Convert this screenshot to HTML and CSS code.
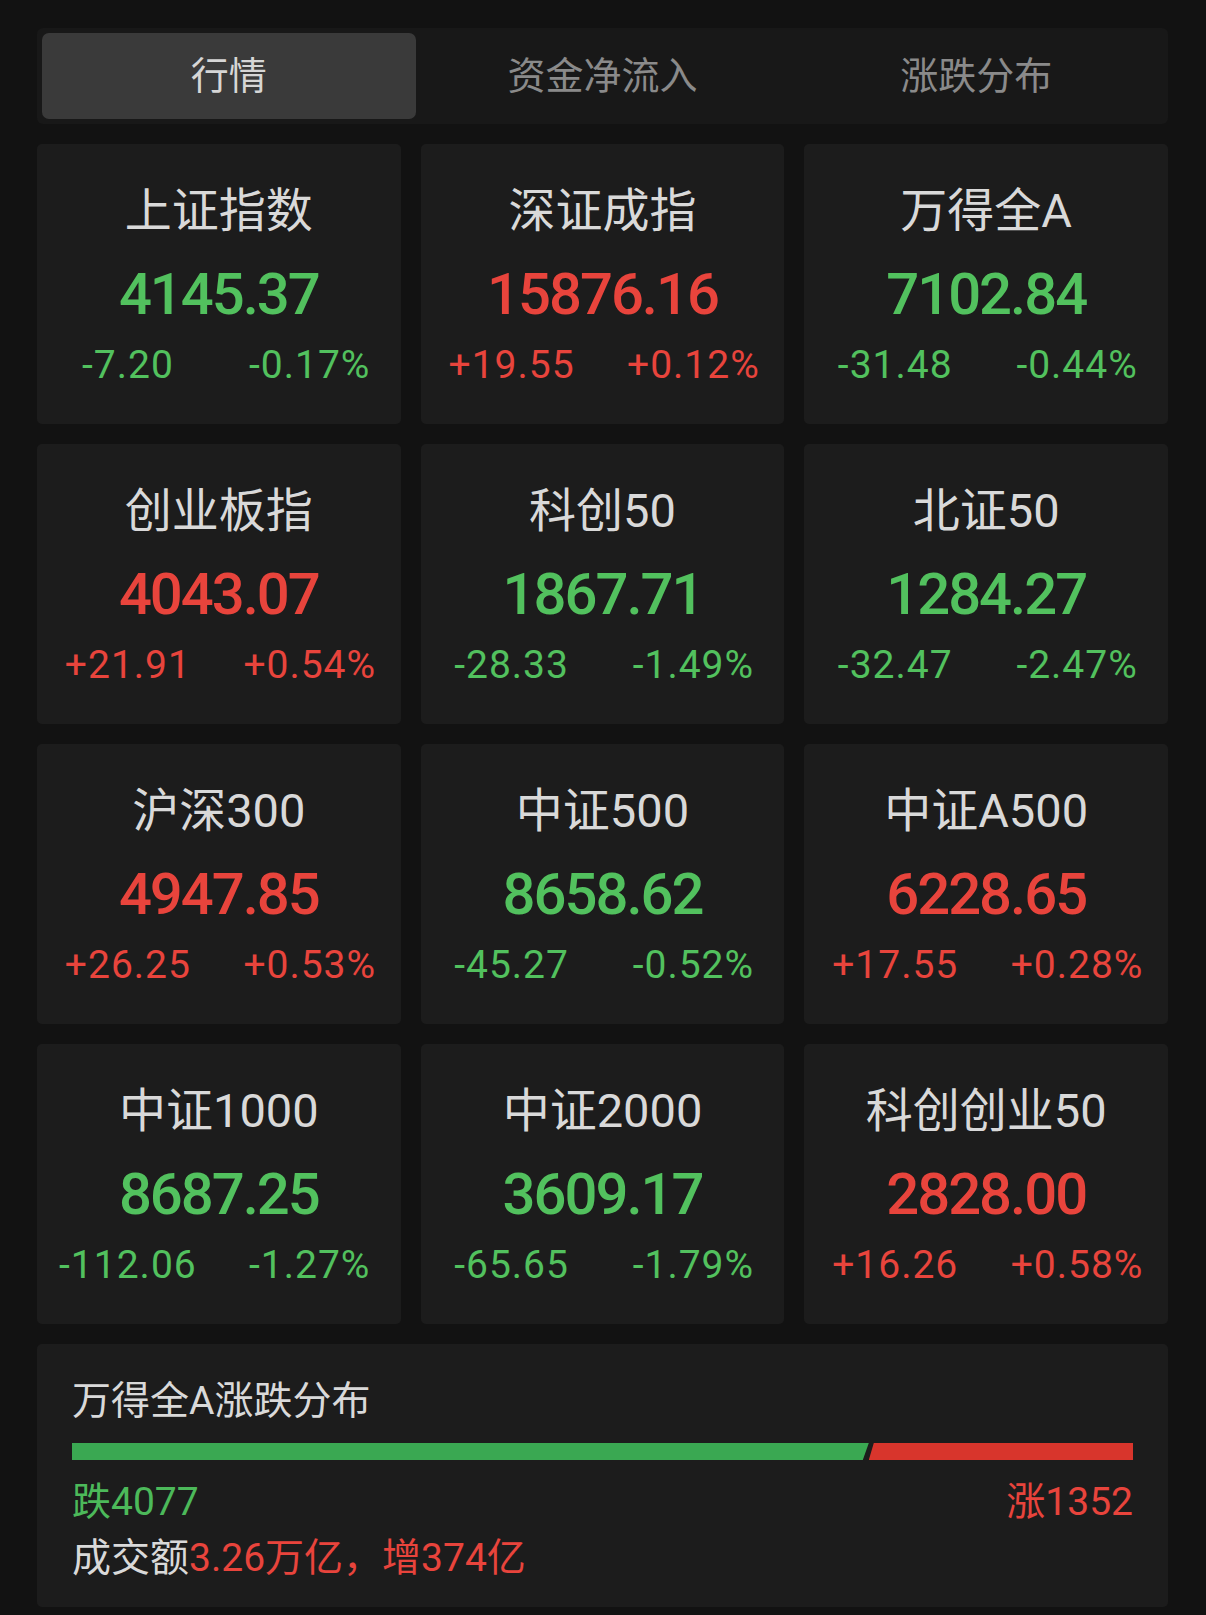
FILE: index.html
```html
<!DOCTYPE html>
<html lang="zh-CN">
<head>
<meta charset="utf-8">
<title>行情</title>
<link rel="stylesheet" href="styles.css">
</head>
<body>
<div class="page">
  <nav class="tabs">
    <div class="tab active">行情</div>
    <div class="tab">资金净流入</div>
    <div class="tab">涨跌分布</div>
  </nav>

  <section class="grid">
    <div class="card down"><div class="name">上证指数</div><div class="price">4145.37</div><div class="chg"><span>-7.20</span><span>-0.17%</span></div></div>
    <div class="card up"><div class="name">深证成指</div><div class="price">15876.16</div><div class="chg"><span>+19.55</span><span>+0.12%</span></div></div>
    <div class="card down"><div class="name">万得全A</div><div class="price">7102.84</div><div class="chg"><span>-31.48</span><span>-0.44%</span></div></div>

    <div class="card up"><div class="name">创业板指</div><div class="price">4043.07</div><div class="chg"><span>+21.91</span><span>+0.54%</span></div></div>
    <div class="card down"><div class="name">科创50</div><div class="price">1867.71</div><div class="chg"><span>-28.33</span><span>-1.49%</span></div></div>
    <div class="card down"><div class="name">北证50</div><div class="price">1284.27</div><div class="chg"><span>-32.47</span><span>-2.47%</span></div></div>

    <div class="card up"><div class="name">沪深300</div><div class="price">4947.85</div><div class="chg"><span>+26.25</span><span>+0.53%</span></div></div>
    <div class="card down"><div class="name">中证500</div><div class="price">8658.62</div><div class="chg"><span>-45.27</span><span>-0.52%</span></div></div>
    <div class="card up"><div class="name">中证A500</div><div class="price">6228.65</div><div class="chg"><span>+17.55</span><span>+0.28%</span></div></div>

    <div class="card down"><div class="name">中证1000</div><div class="price">8687.25</div><div class="chg"><span>-112.06</span><span>-1.27%</span></div></div>
    <div class="card down"><div class="name">中证2000</div><div class="price">3609.17</div><div class="chg"><span>-65.65</span><span>-1.79%</span></div></div>
    <div class="card up"><div class="name">科创创业50</div><div class="price">2828.00</div><div class="chg"><span>+16.26</span><span>+0.58%</span></div></div>
  </section>

  <section class="dist">
    <div class="dist-title">万得全A涨跌分布</div>
    <div class="bar">
      <div class="bar-fall" style="width: 75.1%"></div>
      <div class="bar-rise"></div>
    </div>
    <div class="counts">
      <span class="fall">跌4077</span>
      <span class="rise">涨1352</span>
    </div>
    <div class="turnover">成交额<span class="rise">3.26万亿，增374亿</span></div>
  </section>
</div>
</body>
</html>
```

FILE: styles.css
```css
html, body {
  margin: 0;
  padding: 0;
  background: #121212;
}

body {
  font-family: Roboto, "Noto Sans CJK SC", sans-serif;
  color: #d9d9d9;
}

.page {
  padding: 28px 38px 0 37px;
}

.tabs {
  display: grid;
  grid-template-columns: repeat(3, 1fr);
  height: 96px;
  box-sizing: border-box;
  padding: 5px;
  background: #181818;
  border-radius: 6px;
}

.tab {
  display: flex;
  align-items: center;
  justify-content: center;
  padding-bottom: 8px;
  box-sizing: border-box;
  font-size: 38px;
  color: #8a8a8a;
  border-radius: 7px;
}

.tab.active {
  background: #3a3a3a;
  color: #d6d6d6;
}

.grid {
  margin-top: 20px;
  display: grid;
  grid-template-columns: repeat(3, 1fr);
  grid-auto-rows: 280px;
  gap: 20px;
}

.card {
  background: #1c1c1c;
  border-radius: 5px;
  display: flex;
  flex-direction: column;
  align-items: stretch;
  padding-top: 39px;
  box-sizing: border-box;
}

.name {
  font-size: 47px;
  line-height: 56px;
  text-align: center;
  color: #d9d9d9;
}

.price {
  margin-top: 20px;
  font-size: 58px;
  line-height: 70px;
  font-weight: 500;
  letter-spacing: -2px;
  text-align: center;
}

.chg {
  margin-top: 12px;
  display: grid;
  grid-template-columns: 1fr 1fr;
  font-size: 39px;
  line-height: 48px;
  letter-spacing: 1px;
}

.chg span {
  text-align: center;
}

.up .price, .up .chg { color: #e8443c; }
.down .price, .down .chg { color: #52c15e; }

.dist {
  margin-top: 20px;
  background: #1c1c1c;
  border-radius: 5px;
  padding: 35px 35px 23px 35px;
}

.dist-title {
  font-size: 39px;
  line-height: 44px;
  color: #d9d9d9;
}

.bar {
  margin-top: 20px;
  height: 17px;
  display: flex;
}

.bar-fall {
  background: #3aa852;
  clip-path: polygon(0 0, 100% 0, calc(100% - 6px) 100%, 0 100%);
}

.bar-rise {
  flex: 1;
  background: #d8352c;
  clip-path: polygon(5px 0, 100% 0, 100% 100%, 0 100%);
}

.counts {
  margin-top: 16px;
  display: flex;
  justify-content: space-between;
  font-size: 39px;
  line-height: 52px;
}

.turnover {
  margin-top: 4px;
  font-size: 39px;
  line-height: 52px;
  color: #d9d9d9;
}

.fall { color: #4cb95a; }
.rise { color: #e8443c; }
```
